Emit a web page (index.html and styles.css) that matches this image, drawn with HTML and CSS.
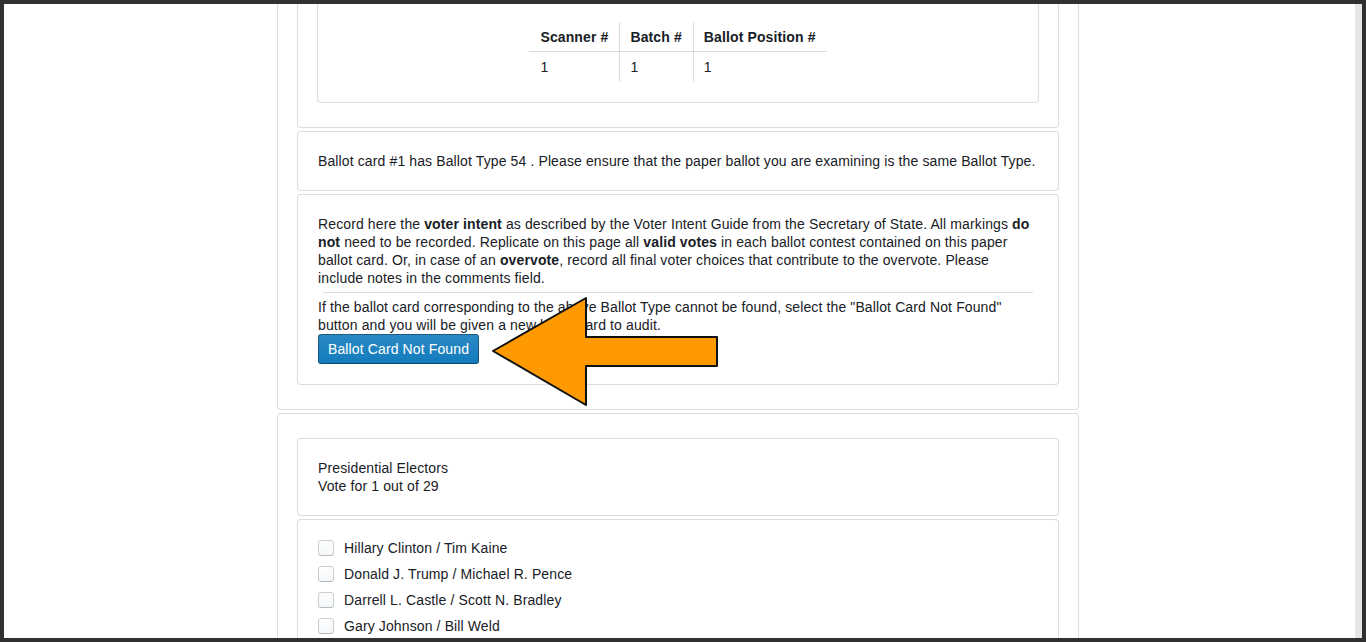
FILE: index.html
```html
<!DOCTYPE html>
<html lang="en">
<head>
<meta charset="utf-8">
<title>Ballot Card Audit</title>
<link rel="stylesheet" href="styles.css">
</head>
<body>
<div class="frame">
  <div class="viewport">
    <div class="page">
      <div class="card outer outer-first">
        <div class="card">
          <div class="card table-card">
            <table class="cvr-table">
              <thead>
                <tr><th>Scanner #</th><th>Batch #</th><th>Ballot Position #</th></tr>
              </thead>
              <tbody>
                <tr><td>1</td><td>1</td><td>1</td></tr>
              </tbody>
            </table>
          </div>
        </div>
        <div class="card">
          <div>Ballot card #1 has Ballot Type 54 . Please ensure that the paper ballot you are examining is the same Ballot Type.</div>
        </div>
        <div class="card">
          <div>Record here the <strong>voter intent</strong> as described by the Voter Intent Guide from the Secretary of State. All markings <strong>do not</strong> need to be recorded. Replicate on this page all <strong>valid votes</strong> in each ballot contest contained on this paper ballot card. Or, in case of an <strong>overvote</strong>, record all final voter choices that contribute to the overvote. Please include notes in the comments field.</div>
          <hr class="divider">
          <div>If the ballot card corresponding to the above Ballot Type cannot be found, select the "Ballot Card Not Found" button and you will be given a new ballot card to audit.</div>
          <button class="btn-primary" type="button">Ballot Card Not Found</button>
        </div>
      </div>
      <div class="card outer">
        <div class="card">
          <div>Presidential Electors</div>
          <div>Vote for 1 out of 29</div>
        </div>
        <div class="card">
          <label class="check"><span class="check-box"></span><span>Hillary Clinton / Tim Kaine</span></label>
          <label class="check"><span class="check-box"></span><span>Donald J. Trump / Michael R. Pence</span></label>
          <label class="check"><span class="check-box"></span><span>Darrell L. Castle / Scott N. Bradley</span></label>
          <label class="check"><span class="check-box"></span><span>Gary Johnson / Bill Weld</span></label>
          <label class="check"><span class="check-box"></span><span>Jill Stein / Ajamu Baraka</span></label>
          <label class="check"><span class="check-box"></span><span>Evan McMullin / Nathan Johnson</span></label>
        </div>
      </div>
    </div>
  </div>
  <div class="scrollbar"></div>
</div>
<svg class="arrow" width="232" height="116" viewBox="0 0 232 116" aria-hidden="true">
  <polygon points="3,56 96,3 96,42 227,42 227,71 96,71 96,110" fill="#ff9900" stroke="#111" stroke-width="2" stroke-linejoin="round"/>
</svg>
</body>
</html>
```

FILE: styles.css
```css
html, body {
  margin: 0;
  padding: 0;
}

body {
  font-family: "Liberation Sans", Arial, sans-serif;
  font-size: 14px;
  line-height: 18px;
  letter-spacing: 0.12px;
  color: #182026;
  position: relative;
}

.frame {
  box-sizing: border-box;
  height: 642px;
  padding: 4px;
  background: #303030;
  display: flex;
}

.viewport {
  flex: 1;
  background: #ffffff;
  overflow: hidden;
}

.scrollbar {
  width: 7px;
  background: #e6e6e6;
}

.page {
  width: 800px;
  margin-left: 274px;
}

.card {
  background: #ffffff;
  border-radius: 3px;
  box-shadow: 0 0 0 1px rgba(16, 22, 26, 0.15);
  padding: 20px;
  margin: 5px 0;
}

.outer-first {
  margin-top: -52px;
}

.cvr-table {
  border-spacing: 0;
  margin: 0 auto;
}

.cvr-table th,
.cvr-table td {
  padding: 6px 11px;
  text-align: left;
  vertical-align: top;
}

.cvr-table th {
  font-weight: 700;
  box-shadow: inset 0 -1px 0 rgba(16, 22, 26, 0.15);
}

.cvr-table th + th {
  box-shadow: inset 1px -1px 0 rgba(16, 22, 26, 0.15);
}

.cvr-table td + td {
  box-shadow: inset 1px 0 0 rgba(16, 22, 26, 0.15);
}

strong {
  font-weight: 700;
}

.divider {
  border: 0;
  border-top: 1px solid rgba(16, 22, 26, 0.15);
  margin: 5px 5px 5px 5px;
  height: 0;
}

.btn-primary {
  display: block;
  box-sizing: border-box;
  height: 30px;
  padding: 5px 10px;
  border: 0;
  border-radius: 3px;
  font-family: inherit;
  font-size: 14px;
  line-height: 20px;
  letter-spacing: 0.12px;
  color: #ffffff;
  background-color: #137cbd;
  background-image: linear-gradient(to bottom, rgba(255, 255, 255, 0.1), rgba(255, 255, 255, 0));
  box-shadow: inset 0 0 0 1px rgba(16, 22, 26, 0.4), inset 0 -1px 0 rgba(16, 22, 26, 0.2);
}

.check {
  display: flex;
  align-items: flex-start;
  gap: 10px;
  line-height: 16px;
  margin-bottom: 10px;
}

.check-box {
  flex: none;
  width: 16px;
  height: 16px;
  border-radius: 3px;
  background-color: #f5f8fa;
  background-image: linear-gradient(to bottom, rgba(255, 255, 255, 0.8), rgba(255, 255, 255, 0));
  box-shadow: inset 0 0 0 1px rgba(16, 22, 26, 0.2), inset 0 -1px 0 rgba(16, 22, 26, 0.1);
}

.arrow {
  position: absolute;
  left: 490px;
  top: 295px;
}
```
